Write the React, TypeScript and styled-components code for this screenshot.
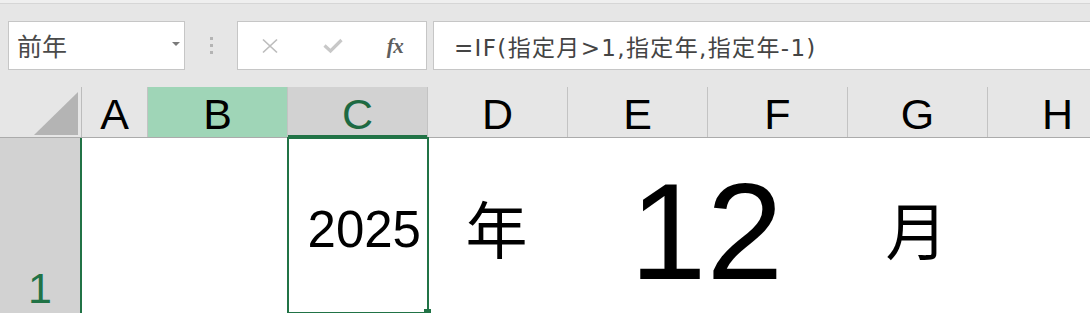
import React from "react";
import styled, { createGlobalStyle } from "styled-components";

const GlobalStyle = createGlobalStyle`
  html, body { margin: 0; padding: 0; overflow: hidden; background: #ffffff; }
  body { font-family: "Liberation Sans", Arial, sans-serif; }
`;

const Window = styled.div`
  width: 1090px;
  height: 313px;
  overflow: hidden;
  display: flex;
  flex-direction: column;
  background: #e6e6e6;
`;

const RibbonEdge = styled.div`
  flex: none;
  height: 3px;
  background: #efefef;
  border-bottom: 1px solid #d6d6d6;
`;

const FormulaRow = styled.div`
  flex: none;
  height: 83px;
  box-sizing: border-box;
  display: flex;
  align-items: flex-start;
  padding: 17px 0 0 8px;
`;

const NameBox = styled.div`
  flex: none;
  width: 177px;
  height: 49px;
  box-sizing: border-box;
  border: 1px solid #c6c6c6;
  background: #fff;
  display: flex;
  align-items: center;
  justify-content: space-between;
  padding: 0 4px 0 8px;
`;

const NameText = styled.span`
  font-family: "Noto Sans CJK JP", sans-serif;
  font-size: 25px;
  line-height: 1;
  color: #4a4a4a;
`;

const Caret = styled.span`
  width: 0;
  height: 0;
  border-left: 4px solid transparent;
  border-right: 4px solid transparent;
  border-top: 4px solid #7a7a7a;
  margin-top: -3px;
`;

const Grip = styled.div`
  flex: none;
  width: 52px;
  height: 49px;
  display: flex;
  flex-direction: column;
  align-items: center;
  justify-content: center;
  gap: 4px;
`;

const GripDot = styled.span`
  width: 3px;
  height: 3px;
  background: #b4b4b4;
`;

const FuncBox = styled.div`
  flex: none;
  width: 190px;
  height: 49px;
  box-sizing: border-box;
  border: 1px solid #c6c6c6;
  background: #fff;
  display: grid;
  grid-template-columns: 63px 63px 62px;
  align-items: center;
  justify-items: center;
`;

const FuncButton = styled.span`
  display: flex;
  align-items: center;
  justify-content: center;
`;

const FxLabel = styled.span`
  font-family: "Liberation Serif", "Times New Roman", serif;
  font-style: italic;
  font-weight: bold;
  font-size: 21px;
  line-height: 1;
  color: #5e5e5e;
  letter-spacing: -0.5px;
  margin-top: 1px;
`;

const FormulaBox = styled.div`
  flex: 1 0 auto;
  height: 49px;
  box-sizing: border-box;
  margin-left: 6px;
  margin-right: -4px;
  border: 1px solid #c6c6c6;
  background: #fff;
  display: flex;
  align-items: center;
  padding-left: 20px;
  font-family: "DejaVu Sans", "Noto Sans CJK JP", sans-serif;
  font-size: 23px;
  letter-spacing: 1.35px;
  color: #444;
  white-space: nowrap;
`;

const HeaderRow = styled.div`
  flex: none;
  height: 51px;
  box-sizing: border-box;
  display: flex;
  border-bottom: 1px solid #ababab;
`;

const Corner = styled.div`
  flex: none;
  width: 82px;
  box-sizing: border-box;
  border-right: 1px solid #bcbcbc;
  display: flex;
  align-items: flex-end;
  justify-content: flex-end;
  padding: 0 3px 2px 0;
`;

const CornerTriangle = styled.div`
  width: 44px;
  height: 43px;
  background: #b4b4b4;
  clip-path: polygon(100% 0, 100% 100%, 0 100%);
`;

type HeaderState = "normal" | "related" | "active";

const ColHeader = styled.div<{ $w: number; $state?: HeaderState }>`
  flex: none;
  position: relative;
  width: ${(p) => p.$w}px;
  box-sizing: border-box;
  border-right: 1px solid #c3c3c3;
  background: ${(p) =>
    p.$state === "related" ? "#9fd5b7" : p.$state === "active" ? "#d2d2d2" : "#e6e6e6"};
  color: ${(p) => (p.$state === "active" ? "#1e6a42" : "#000")};
  display: flex;
  justify-content: center;
  align-items: flex-start;
  padding-top: 6px;
  font-size: 43px;
  line-height: 1;
  ${(p) => (p.$state === "active" ? "box-shadow: inset 0 -2px 0 #217346;" : "")}
`;

const BodyRow = styled.div`
  flex: none;
  height: 175px;
  display: flex;
  background: #fff;
`;

const RowHeader = styled.div`
  flex: none;
  width: 82px;
  box-sizing: border-box;
  background: #d2d2d2;
  border-right: 2px solid #217346;
  display: flex;
  justify-content: center;
  align-items: flex-end;
  padding-bottom: 3px;
  font-size: 43px;
  line-height: 1;
  color: #217346;
`;

const Cell = styled.div<{ $w: number; $align?: "left" | "center" | "right"; $padTop?: number }>`
  flex: none;
  position: relative;
  width: ${(p) => p.$w}px;
  box-sizing: border-box;
  display: flex;
  align-items: center;
  justify-content: ${(p) =>
    p.$align === "right" ? "flex-end" : p.$align === "center" ? "center" : "flex-start"};
  padding: ${(p) => p.$padTop ?? 0}px 7px 0 4px;
  color: #000;
`;

const CellText = styled.span<{ $size: number; $cjk?: boolean }>`
  font-family: ${(p) =>
    p.$cjk ? '"Noto Sans CJK JP", sans-serif' : '"Liberation Sans", Arial, sans-serif'};
  font-size: ${(p) => p.$size}px;
  line-height: 1;
  white-space: nowrap;
`;

const SelectionFrame = styled.div`
  position: absolute;
  top: -1px;
  left: -1px;
  right: -1px;
  bottom: -1px;
  border: 2px solid #217346;
  pointer-events: none;
`;

const FillHandle = styled.div`
  position: absolute;
  right: -3px;
  bottom: -3px;
  width: 7px;
  height: 7px;
  background: #217346;
`;

const CloseIcon = () => (
  <svg width="18" height="16" viewBox="0 0 18 16" fill="none">
    <path d="M2 1.5 L16 14.5 M16 1.5 L2 14.5" stroke="#bdbdbd" strokeWidth="1.7" />
  </svg>
);

const CheckIcon = () => (
  <svg width="20" height="16" viewBox="0 0 20 16" fill="none">
    <path d="M1.5 7.5 L7.5 13 L18.5 2" stroke="#c8c8c8" strokeWidth="3.2" />
  </svg>
);

const columns: { id: string; w: number; state?: HeaderState }[] = [
  { id: "A", w: 66 },
  { id: "B", w: 140, state: "related" },
  { id: "C", w: 140, state: "active" },
  { id: "D", w: 140 },
  { id: "E", w: 140 },
  { id: "F", w: 140 },
  { id: "G", w: 140 },
  { id: "H", w: 140 },
];

export default function App() {
  return (
    <>
      <GlobalStyle />
      <Window>
        <RibbonEdge />
        <FormulaRow>
          <NameBox>
            <NameText>前年</NameText>
            <Caret />
          </NameBox>
          <Grip>
            <GripDot />
            <GripDot />
            <GripDot />
          </Grip>
          <FuncBox>
            <FuncButton>
              <CloseIcon />
            </FuncButton>
            <FuncButton>
              <CheckIcon />
            </FuncButton>
            <FuncButton>
              <FxLabel>fx</FxLabel>
            </FuncButton>
          </FuncBox>
          <FormulaBox>=IF(指定月&gt;1,指定年,指定年-1)</FormulaBox>
        </FormulaRow>
        <HeaderRow>
          <Corner>
            <CornerTriangle />
          </Corner>
          {columns.map((c) => (
            <ColHeader key={c.id} $w={c.w} $state={c.state}>
              {c.id}
            </ColHeader>
          ))}
        </HeaderRow>
        <BodyRow>
          <RowHeader>1</RowHeader>
          <Cell $w={66} />
          <Cell $w={140} />
          <Cell $w={140} $align="right" $padTop={7}>
            <CellText $size={51}>2025</CellText>
            <SelectionFrame />
            <FillHandle />
          </Cell>
          <Cell $w={140} $align="center" $padTop={3}>
            <CellText $size={62} $cjk>年</CellText>
          </Cell>
          <Cell $w={280} $align="center" $padTop={11}>
            <CellText $size={138}>12</CellText>
          </Cell>
          <Cell $w={140} $align="center" $padTop={5}>
            <CellText $size={62} $cjk>月</CellText>
          </Cell>
          <Cell $w={140} />
        </BodyRow>
      </Window>
    </>
  );
}
